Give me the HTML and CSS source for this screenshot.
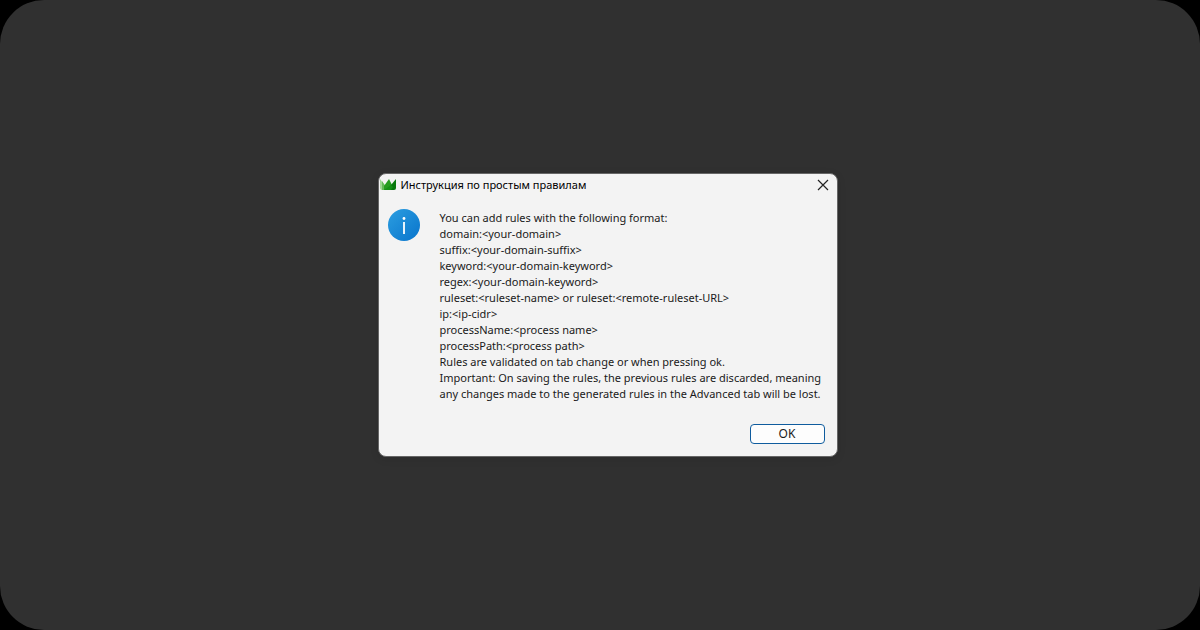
FILE: index.html
```html
<!DOCTYPE html>
<html lang="ru">
<head>
<meta charset="utf-8">
<meta name="viewport" content="width=device-width, initial-scale=1">
<title>Инструкция по простым правилам</title>
<link rel="stylesheet" href="styles.css">
</head>
<body>
<main class="backdrop">
  <section class="dialog" role="dialog" aria-labelledby="dialog-title">
    <header class="titlebar">
      <svg class="app-icon" viewBox="0 0 16 14" aria-hidden="true">
        <path d="M0 1 6 9V12H2Q0 12 0 10Z" fill="#9bd691"/>
        <path d="M2 3 6 9V12H2Z" fill="#62b957"/>
        <path d="M4 8 9 1 12 7 10 12H4Z" fill="#259c20"/>
        <path d="M11 7 16 1V10Q16 12 14 12H9Z" fill="#08780c"/>
        <path d="M4 12 11 7 13 9 11 12Z" fill="#159016"/>
      </svg>
      <h1 class="title" id="dialog-title">Инструкция по простым правилам</h1>
      <button class="close" type="button" aria-label="Закрыть">
        <svg viewBox="0 0 12 12" aria-hidden="true"><path d="M1 1 11 11M11 1 1 11" fill="none" stroke="#222" stroke-width="1.2"/></svg>
      </button>
    </header>
    <div class="content">
      <svg class="info-icon" viewBox="0 0 32 32" aria-hidden="true">
        <defs><linearGradient id="blue" x1="0" y1="0" x2="1" y2="1"><stop offset="0" stop-color="#2c9ee0"/><stop offset="1" stop-color="#0874cc"/></linearGradient></defs>
        <circle cx="16" cy="16" r="16" fill="url(#blue)"/>
        <circle cx="16" cy="9.5" r="1.4" fill="#fff"/>
        <path d="M16 13V25" stroke="#fff" stroke-width="1.8"/>
      </svg>
      <p class="message">You can add rules with the following format:<br>
domain:&lt;your-domain&gt;<br>
suffix:&lt;your-domain-suffix&gt;<br>
keyword:&lt;your-domain-keyword&gt;<br>
regex:&lt;your-domain-keyword&gt;<br>
ruleset:&lt;ruleset-name&gt; or ruleset:&lt;remote-ruleset-URL&gt;<br>
ip:&lt;ip-cidr&gt;<br>
processName:&lt;process name&gt;<br>
processPath:&lt;process path&gt;<br>
Rules are validated on tab change or when pressing ok.<br>
Important: On saving the rules, the previous rules are discarded, meaning<br>
any changes made to the generated rules in the Advanced tab will be lost.</p>
    </div>
    <footer class="actions"><button class="ok" type="button">OK</button></footer>
  </section>
</main>
</body>
</html>
```

FILE: styles.css
```css
* {
  box-sizing: border-box;
}

body {
  margin: 0;
  background: #000;
  color: #1a1a1a;
  font: 11px/16px "Noto Sans", "Open Sans", sans-serif;
}

.backdrop {
  display: flex;
  align-items: center;
  justify-content: center;
  min-height: 100vh;
  padding-left: 15px;
  border-radius: 44px;
  background: #303030;
}

.dialog {
  width: 100%;
  max-width: 460px;
  border: 1px solid #666;
  border-radius: 8px;
  background: #f3f3f3;
  box-shadow: 0 2px 8px #0000001a;
}

.titlebar {
  display: flex;
  align-items: center;
  gap: 5px;
  height: 22px;
  padding: 0 8px 0 1px;
}

.app-icon {
  width: 16px;
  height: 14px;
}

.title {
  flex: 1;
  margin: 0;
  color: #000;
  font-size: 11px;
  font-weight: 400;
}

.close {
  display: grid;
  width: 12px;
  height: 12px;
  padding: 0;
  border: 0;
  background: none;
}

.content {
  display: flex;
  gap: 20px;
  padding: 13px 9px 0;
}

.info-icon {
  flex: none;
  width: 32px;
  height: 32px;
}

.message {
  margin: 0;
  padding-top: 1px;
}

.actions {
  display: flex;
  justify-content: flex-end;
  padding: 22px 12px 12px;
}

.ok {
  width: 75px;
  height: 20px;
  padding: 0;
  border: 1px solid #0f5c9e;
  border-radius: 4px;
  background: #fdfdfd;
  color: #1a1a1a;
  font: inherit;
  font-size: 12px;
}
```
